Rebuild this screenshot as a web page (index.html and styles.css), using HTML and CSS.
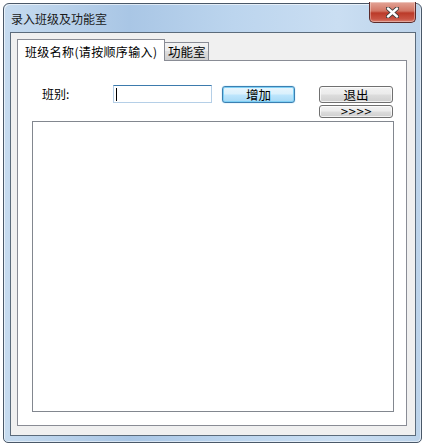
FILE: index.html
```html
<!DOCTYPE html>
<html lang="zh-CN">
<head>
<meta charset="utf-8">
<title>录入班级及功能室</title>
<link rel="stylesheet" href="styles.css">
</head>
<body>
<div class="window">
  <div class="titlebar">
    <span class="title">录入班级及功能室</span>
    <span class="close">
      <svg width="13" height="11" viewBox="0 0 13 11">
        <path d="M2 1.5 L11 9.5 M11 1.5 L2 9.5" stroke="#3a3a3a" stroke-width="4.2" stroke-linecap="round"/>
        <path d="M2 1.5 L11 9.5 M11 1.5 L2 9.5" stroke="#ffffff" stroke-width="2.4" stroke-linecap="round"/>
      </svg>
    </span>
  </div>
  <div class="client">
    <div class="tabs">
      <div class="tabstrip">
        <div class="tab active">班级名称(请按顺序输入)</div>
        <div class="tab">功能室</div>
      </div>
      <div class="panel">
        <div class="row">
          <label class="lbl">班别:</label>
          <div class="input"><span class="caret"></span></div>
          <button class="btn focus">增加</button>
          <div class="col">
            <button class="btn">退出</button>
            <button class="btn small">&gt;&gt;&gt;&gt;</button>
          </div>
        </div>
        <div class="listbox"></div>
      </div>
    </div>
  </div>
</div>
</body>
</html>
```
FILE: styles.css
```css
* { box-sizing: border-box; }
html, body { margin: 0; padding: 0; background: #ffffff; }
body {
  font-family: "Noto Sans CJK SC", "Noto Sans", sans-serif;
  font-size: 12px;
  color: #000;
  width: 426px;
  height: 446px;
  overflow: hidden;
}
.window {
  margin: 3px 0 0 3px;
  width: 419px;
  height: 440px;
  border: 1px solid #4a5868;
  border-radius: 6px 6px 5px 5px;
  background: linear-gradient(90deg, #c6dbef 0%, #a9c6e5 30%, #bcd5ee 55%, #cadef2 80%, #bcd3ea 100%);
  padding: 0 5px 6px 6px;
  display: flex;
  flex-direction: column;
  box-shadow: inset 1px 1px 0 rgba(255,255,255,0.6), inset -1px -1px 0 rgba(255,255,255,0.5);
}
.titlebar {
  height: 28px;
  display: flex;
  align-items: flex-start;
  justify-content: space-between;
  flex: none;
}
.title {
  margin: 6px 0 0 1px;
  line-height: 18px;
  color: #1a1a1a;
}
.close {
  margin: -2px 0 0 0;
  width: 47px;
  height: 21px;
  border: 1px solid #5a2a2a;
  border-top: none;
  border-radius: 0 0 5px 5px;
  background: linear-gradient(180deg, #e3a497 0%, #d27564 45%, #bb3a29 55%, #c95444 85%, #d98070 100%);
  display: flex;
  align-items: center;
  justify-content: center;
  box-shadow: inset 0 0 0 1px rgba(255,255,255,0.35);
}
.client {
  flex: 1;
  border: 1px solid #5b6b7b;
  background: #f0f0f0;
  padding: 6px 8px 9px 6px;
  display: flex;
}
.tabs {
  flex: 1;
  display: flex;
  flex-direction: column;
}
.tabstrip {
  display: flex;
  align-items: flex-end;
  height: 21px;
  position: relative;
  z-index: 1;
}
.tab {
  height: 18px;
  border: 1px solid #898c95;
  border-bottom: none;
  border-left: none;
  padding: 0 0 0 3px;
  line-height: 18px;
  background: linear-gradient(180deg, #f2f2f2 0%, #ebebeb 45%, #dddddd 50%, #cfcfcf 100%);
  width: 44px;
  font-size: 12.5px;
}
.tab.active {
  width: 148px;
  border-left: 1px solid #898c95;
  background: #ffffff;
  padding: 0 0 0 7px;
  line-height: 23px;
  margin-bottom: -1px;
  height: 22px;
  letter-spacing: 0.35px;
  font-size: 12px;
}
.panel {
  flex: 1;
  border: 1px solid #898c95;
  background: #ffffff;
  padding: 24px 12px 13px 14px;
  display: flex;
  flex-direction: column;
}
.row {
  display: flex;
  align-items: flex-start;
  margin-left: 10px;
  height: 33px;
}
.lbl {
  width: 71px;
  line-height: 18px;
}
.input {
  width: 99px;
  height: 18px;
  border: 1px solid #b5cfe7;
  border-top-color: #3d7bad;
  background: #fff;
  padding: 2px 0 0 2px;
}
.caret {
  display: block;
  width: 1px;
  height: 13px;
  background: #000;
}
.btn {
  font-family: "Noto Sans CJK SC", "Noto Sans", sans-serif;
  font-size: 12.5px;
  line-height: 13px;
  margin: 1px 0 0 10px;
  padding: 0;
  width: 73px;
  height: 17px;
  border: 1px solid #707070;
  border-radius: 3px;
  background: linear-gradient(180deg, #f2f2f2 0%, #ebebeb 48%, #dddddd 52%, #cfcfcf 100%);
  color: #000;
  box-shadow: inset 0 0 0 1px rgba(255,255,255,0.7);
}
.btn.focus {
  border-color: #3c7fb1;
  background: linear-gradient(180deg, #eaf6fd 0%, #d9f0fc 48%, #bee6fd 52%, #a7d9f5 100%);
  box-shadow: inset 0 0 0 1px #7fd0f5, 0 0 1px #47b0e8;
}
.col {
  margin-left: 24px;
  width: 74px;
  display: flex;
  flex-direction: column;
}
.col .btn {
  margin: 1px 0 0 0;
  width: 74px;
}
.col .btn.small {
  margin-top: 2px;
  height: 13px;
  font-family: "DejaVu Sans", sans-serif;
  font-size: 10px;
  line-height: 10px;
  letter-spacing: -0.5px;
}
.listbox {
  margin-top: 3px;
  flex: 1;
  border: 1px solid #82878f;
  background: #fff;
}
```
